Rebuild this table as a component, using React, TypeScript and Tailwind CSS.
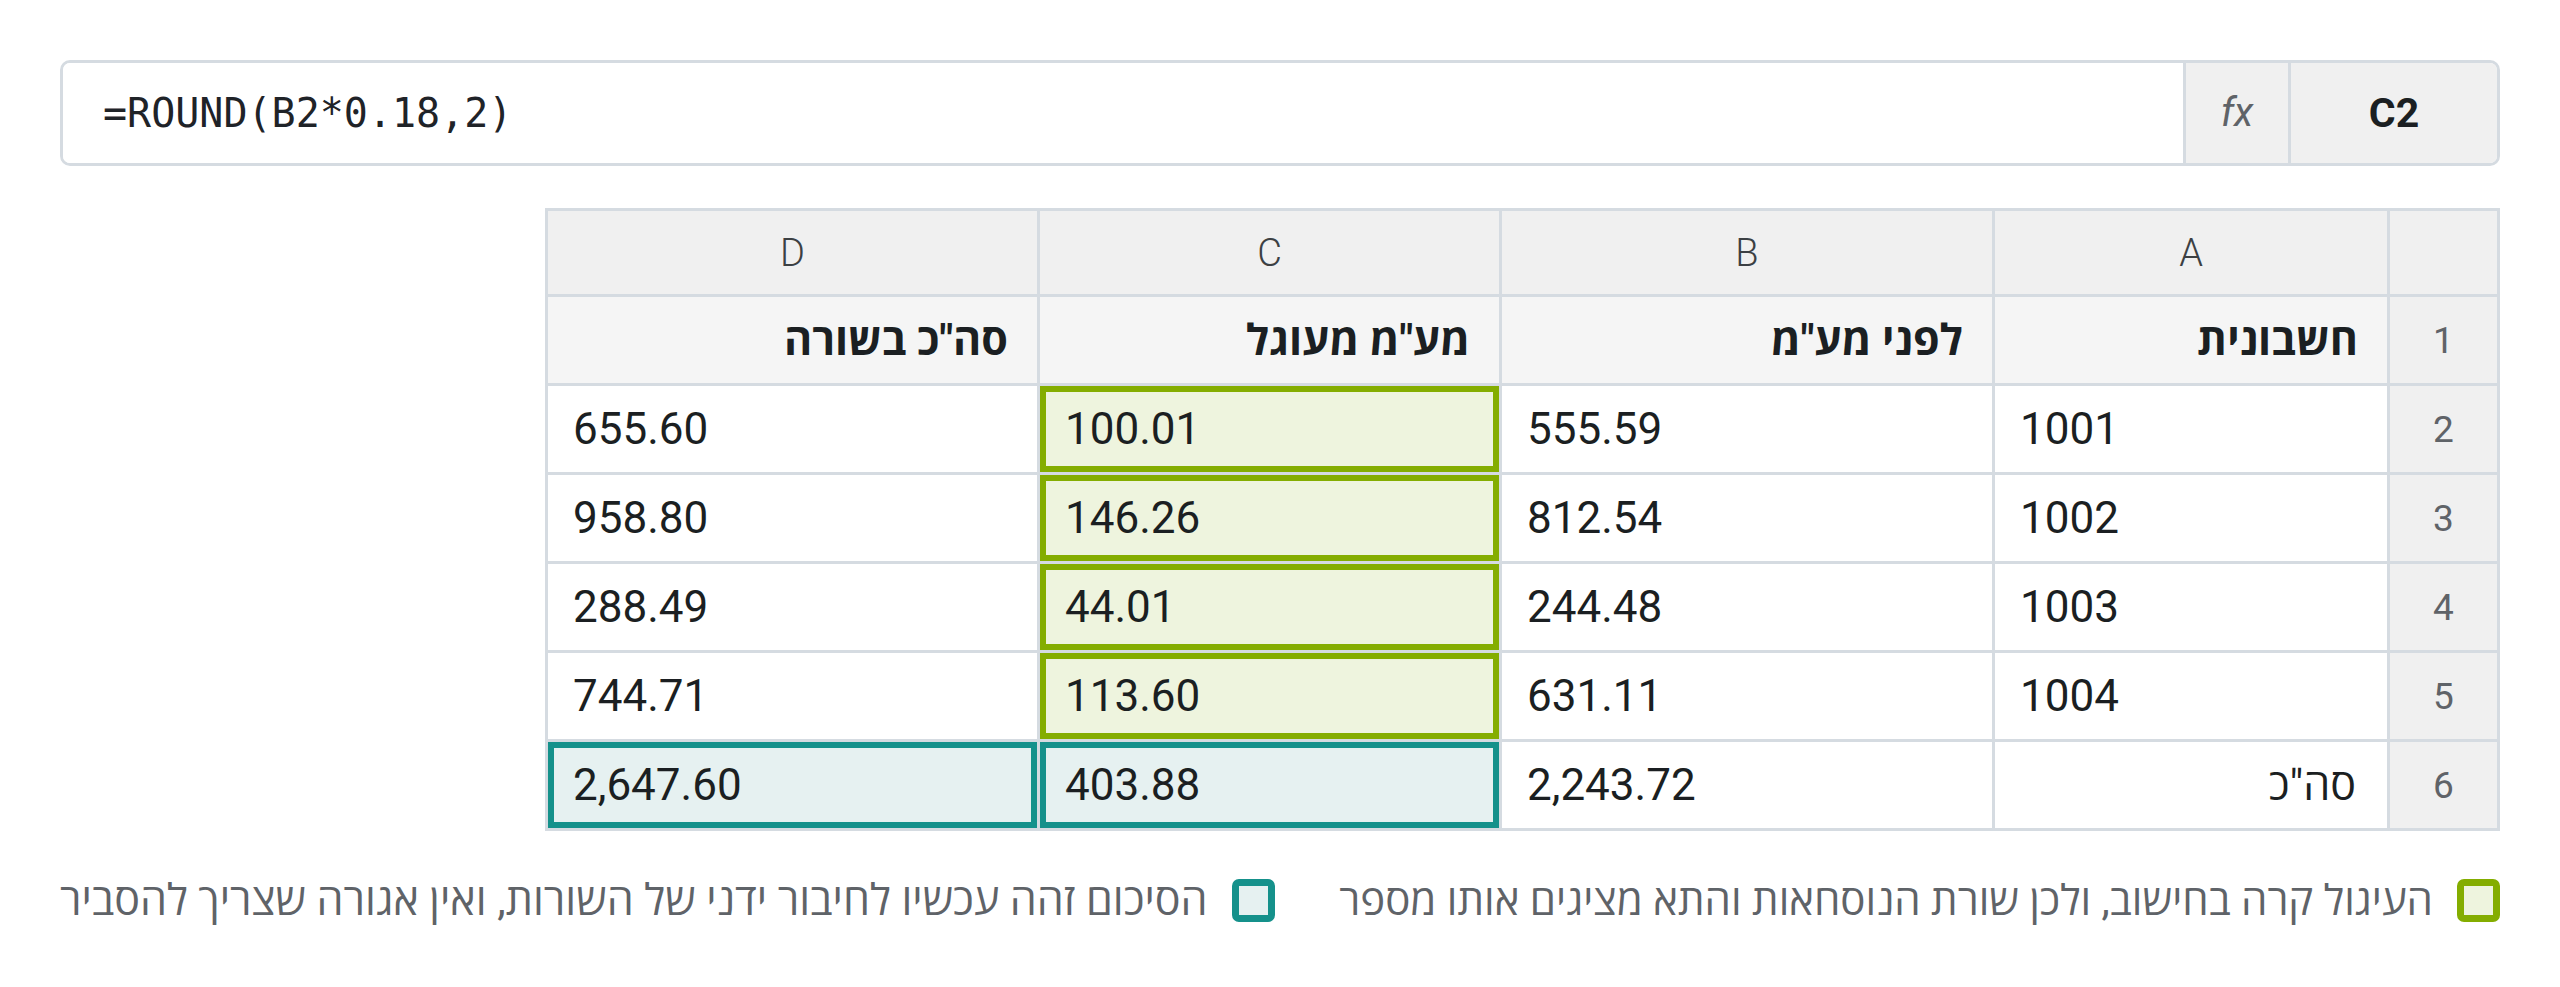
import React from "react";

const rows = [
  { n: "2", a: "1001", b: "555.59", c: "100.01", d: "655.60" },
  { n: "3", a: "1002", b: "812.54", c: "146.26", d: "958.80" },
  { n: "4", a: "1003", b: "244.48", c: "44.01", d: "288.49" },
  { n: "5", a: "1004", b: "631.11", c: "113.60", d: "744.71" },
];

function ColHead({ children }: { children?: React.ReactNode }) {
  return (
    <div className="flex items-center justify-center bg-[#f0f0f0] text-[38px] font-light leading-none text-[#3c4043]">
      {children}
    </div>
  );
}

function RowNum({ children }: { children: React.ReactNode }) {
  return (
    <div className="flex items-center justify-center bg-[#f0f0f0] text-[37px] font-normal leading-none text-[#5f6368]">
      {children}
    </div>
  );
}

function HeadCell({ children }: { children: React.ReactNode }) {
  return (
    <div className="flex items-center justify-start bg-[#f5f5f5] pr-[29px] text-[43px] font-bold leading-none text-[#1b1f22]">
      {children}
    </div>
  );
}

function NumCell({ children }: { children: React.ReactNode }) {
  return (
    <div className="flex items-center justify-end bg-white pl-[25px] text-[44px] leading-none text-[#1b1f22]">
      <span dir="ltr">{children}</span>
    </div>
  );
}

function GreenCell({ children }: { children: React.ReactNode }) {
  return (
    <div className="flex items-center justify-end border-[6px] border-[#84ad00] bg-[#eef4de] pl-[19px] text-[44px] leading-none text-[#1b1f22]">
      <span dir="ltr">{children}</span>
    </div>
  );
}

function TealCell({ children }: { children: React.ReactNode }) {
  return (
    <div className="flex items-center justify-end border-[6px] border-[#15918b] bg-[#e6f1f1] pl-[19px] text-[44px] leading-none text-[#1b1f22]">
      <span dir="ltr">{children}</span>
    </div>
  );
}

export default function App() {
  return (
    <div className="min-h-screen bg-white px-[60px] pt-[60px] [font-family:Roboto,'Open_Sans','Noto_Sans',sans-serif]">
      {/* Formula bar */}
      <div dir="rtl" className="flex h-[106px] overflow-hidden rounded-[10px] border-[3px] border-[#d5dbe1]">
        <div className="flex w-[206px] items-center justify-center bg-[#f0f0f0] text-[41px] font-bold leading-none text-[#1b1f22]">
          C2
        </div>
        <div className="flex w-[108px] items-center justify-center border-x-[3px] border-[#d5dbe1] bg-[#f0f0f0] text-[40px] italic leading-none text-[#5f6368]">
          fx
        </div>
        <div dir="ltr" className="flex flex-1 items-center bg-white pl-[40px] text-[40px] leading-none text-[#1f2328] [font-family:'DejaVu_Sans_Mono',monospace]">
          =ROUND(B2*0.18,2)
        </div>
      </div>

      {/* Sheet */}
      <div className="mt-[42px] flex justify-end">
        <div
          dir="rtl"
          className="grid grid-cols-[107px_392px_490px_459px_489px] grid-rows-[83px_86px_86px_86px_86px_86px_86px] gap-[3px] bg-[#d5dbe1] p-[3px]"
        >
          <ColHead />
          <ColHead>A</ColHead>
          <ColHead>B</ColHead>
          <ColHead>C</ColHead>
          <ColHead>D</ColHead>

          <RowNum>1</RowNum>
          <HeadCell>חשבונית</HeadCell>
          <HeadCell>לפני מע"מ</HeadCell>
          <HeadCell>מע"מ מעוגל</HeadCell>
          <HeadCell>סה"כ בשורה</HeadCell>

          {rows.map((r) => (
            <React.Fragment key={r.n}>
              <RowNum>{r.n}</RowNum>
              <NumCell>{r.a}</NumCell>
              <NumCell>{r.b}</NumCell>
              <GreenCell>{r.c}</GreenCell>
              <NumCell>{r.d}</NumCell>
            </React.Fragment>
          ))}

          <RowNum>6</RowNum>
          <div className="flex items-center justify-start bg-white pr-[31px] text-[43px] leading-none text-[#1b1f22]">
            סה"כ
          </div>
          <NumCell>2,243.72</NumCell>
          <TealCell>403.88</TealCell>
          <TealCell>2,647.60</TealCell>
        </div>
      </div>

      {/* Legend */}
      <div dir="rtl" className="mt-[48px] flex items-center justify-between">
        <div className="flex items-center gap-[24px]">
          <div className="h-[43px] w-[43px] shrink-0 rounded-[7px] border-[7px] border-[#84ad00] bg-[#eef4de]" />
          <span className="whitespace-nowrap text-[42px] leading-none text-[#5f6368]">
            העיגול קרה בחישוב, ולכן שורת הנוסחאות והתא מציגים אותו מספר
          </span>
        </div>
        <div className="flex items-center gap-[24px]">
          <div className="h-[43px] w-[43px] shrink-0 rounded-[7px] border-[7px] border-[#15918b] bg-[#e6f1f1]" />
          <span className="whitespace-nowrap text-[43px] leading-none text-[#5f6368]">
            הסיכום זהה עכשיו לחיבור ידני של השורות, ואין אגורה שצריך להסביר
          </span>
        </div>
      </div>
    </div>
  );
}
